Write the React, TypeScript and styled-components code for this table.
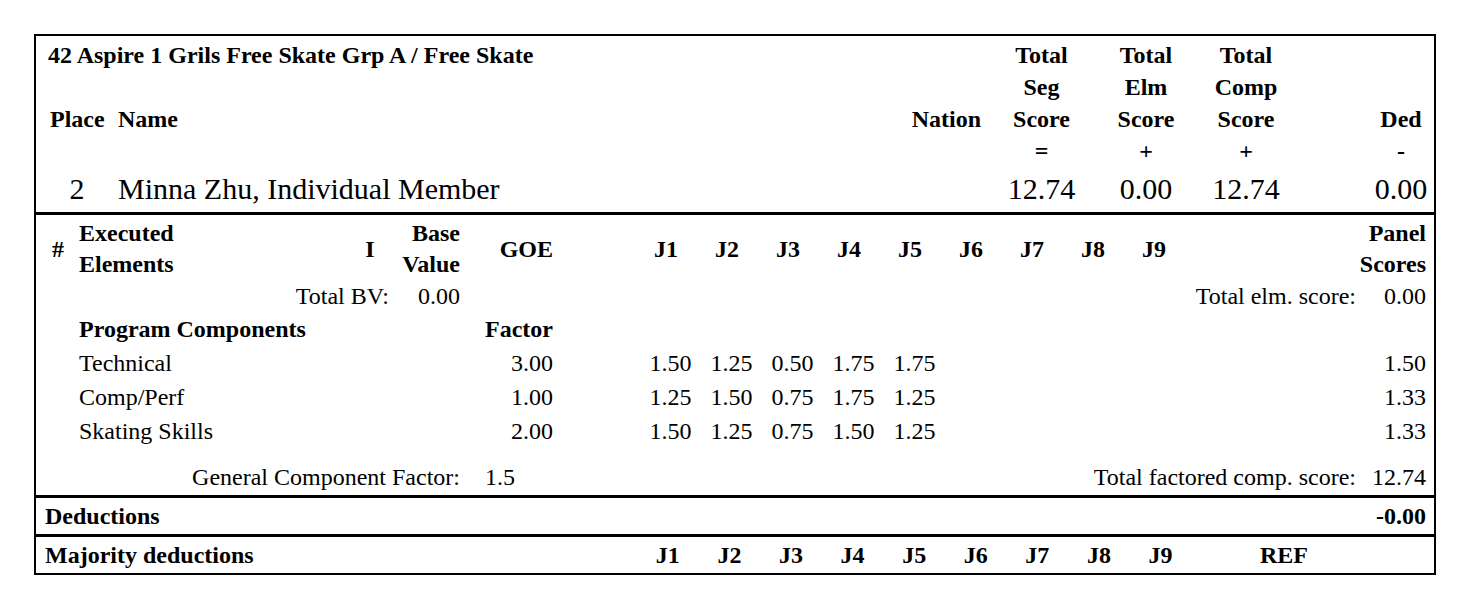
import styled, { createGlobalStyle } from 'styled-components'

const GlobalStyle = createGlobalStyle`
  body {
    margin: 0;
    background: #fff;
  }
`

// column templates, measured from the inner left edge of the sheet
const HEAD_COLS = '8px 66px 785px 90px 113px 96px 104px 70px 66px'
const DETAIL_COLS = '40px 269px 50px 70px 93px 77.5px repeat(9, 61px) 171.5px 78px'
const MAJ_COLS = '601px repeat(9, 61.6px) 185.2px 57.4px'

const Sheet = styled.div`
  box-sizing: border-box;
  width: 1402px;
  margin: 34px 0 0 34px;
  border: 2px solid #000;
  font-family: 'Liberation Serif', 'Times New Roman', Times, serif;
  font-size: 24px;
  color: #000;
`

const Section = styled.div<{ $divider?: boolean; $pt?: number; $pb?: number }>`
  border-top: ${p => (p.$divider ? '3px solid #000' : 'none')};
  padding: ${p => p.$pt ?? 0}px 0 ${p => p.$pb ?? 0}px;
`

const Row = styled.div<{ $cols: string; $h: number; $size?: number; $mt?: number }>`
  display: grid;
  grid-template-columns: ${p => p.$cols};
  height: ${p => p.$h}px;
  margin-top: ${p => p.$mt ?? 0}px;
  font-size: ${p => p.$size ?? 24}px;
  align-items: center;
`

const Cell = styled.div<{
  $align?: 'left' | 'center' | 'right'
  $bold?: boolean
  $span?: number
  $pl?: number
  $pr?: number
}>`
  grid-column: span ${p => p.$span ?? 1};
  text-align: ${p => p.$align ?? 'left'};
  font-weight: ${p => (p.$bold ? 700 : 400)};
  padding-left: ${p => p.$pl ?? 0}px;
  padding-right: ${p => p.$pr ?? 0}px;
  line-height: 31px;
  white-space: nowrap;
`

const judges = ['J1', 'J2', 'J3', 'J4', 'J5', 'J6', 'J7', 'J8', 'J9']

const components = [
  { name: 'Technical', factor: '3.00', marks: ['1.50', '1.25', '0.50', '1.75', '1.75'], panel: '1.50' },
  { name: 'Comp/Perf', factor: '1.00', marks: ['1.25', '1.50', '0.75', '1.75', '1.25'], panel: '1.33' },
  { name: 'Skating Skills', factor: '2.00', marks: ['1.50', '1.25', '0.75', '1.50', '1.25'], panel: '1.33' },
]

function Header() {
  return (
    <Section $pt={3} $pb={3}>
      <Row $cols={HEAD_COLS} $h={32}>
        <Cell $span={4} $pl={12} $bold>42 Aspire 1 Grils Free Skate Grp A / Free Skate</Cell>
        <Cell $align="center" $bold>Total</Cell>
        <Cell $align="center" $bold>Total</Cell>
        <Cell $align="center" $bold>Total</Cell>
      </Row>
      <Row $cols={HEAD_COLS} $h={32}>
        <Cell $span={4} />
        <Cell $align="center" $bold>Seg</Cell>
        <Cell $align="center" $bold>Elm</Cell>
        <Cell $align="center" $bold>Comp</Cell>
      </Row>
      <Row $cols={HEAD_COLS} $h={32}>
        <Cell />
        <Cell $pl={6} $bold>Place</Cell>
        <Cell $pl={8} $bold>Name</Cell>
        <Cell $align="right" $pr={4} $bold>Nation</Cell>
        <Cell $align="center" $bold>Score</Cell>
        <Cell $align="center" $bold>Score</Cell>
        <Cell $align="center" $bold>Score</Cell>
        <Cell />
        <Cell $align="center" $bold>Ded</Cell>
      </Row>
      <Row $cols={HEAD_COLS} $h={32}>
        <Cell $span={4} />
        <Cell $align="center" $bold>=</Cell>
        <Cell $align="center" $bold>+</Cell>
        <Cell $align="center" $bold>+</Cell>
        <Cell />
        <Cell $align="center" $bold>-</Cell>
      </Row>
      <Row $cols={HEAD_COLS} $h={42} $size={30}>
        <Cell />
        <Cell $align="center">2</Cell>
        <Cell $pl={8}>Minna Zhu, Individual Member</Cell>
        <Cell />
        <Cell $align="center">12.74</Cell>
        <Cell $align="center">0.00</Cell>
        <Cell $align="center">12.74</Cell>
        <Cell />
        <Cell $align="center">0.00</Cell>
      </Row>
    </Section>
  )
}

function Details() {
  return (
    <Section $divider $pt={3} $pb={1}>
      <Row $cols={DETAIL_COLS} $h={62}>
        <Cell $pl={16} $bold>#</Cell>
        <Cell $pl={3} $bold>Executed<br />Elements</Cell>
        <Cell $align="center" $bold>I</Cell>
        <Cell $align="right" $pr={5} $bold>Base<br />Value</Cell>
        <Cell $align="right" $pr={5} $bold>GOE</Cell>
        <Cell />
        {judges.map(j => (
          <Cell key={j} $align="center" $bold>{j}</Cell>
        ))}
        <Cell />
        <Cell $align="right" $pr={8} $bold>Panel<br />Scores</Cell>
      </Row>
      <Row $cols={DETAIL_COLS} $h={33}>
        <Cell />
        <Cell $span={2} $align="right" $pr={6}>Total BV:</Cell>
        <Cell $align="right" $pr={5}>0.00</Cell>
        <Cell $span={2} />
        <Cell $span={10} $align="right">Total elm. score:</Cell>
        <Cell $align="right" $pr={8}>0.00</Cell>
      </Row>
      <Row $cols={DETAIL_COLS} $h={33}>
        <Cell />
        <Cell $span={3} $pl={3} $bold>Program Components</Cell>
        <Cell $align="right" $pr={5} $bold>Factor</Cell>
      </Row>
      {components.map(c => (
        <Row key={c.name} $cols={DETAIL_COLS} $h={34}>
          <Cell />
          <Cell $span={3} $pl={3}>{c.name}</Cell>
          <Cell $align="right" $pr={5}>{c.factor}</Cell>
          <Cell />
          {judges.map((j, i) => (
            <Cell key={j} $align="right" $pr={5}>{c.marks[i] ?? ''}</Cell>
          ))}
          <Cell />
          <Cell $align="right" $pr={8}>{c.panel}</Cell>
        </Row>
      ))}
      <Row $cols={DETAIL_COLS} $h={34} $mt={12}>
        <Cell $span={4} $align="right" $pr={5}>General Component Factor:</Cell>
        <Cell $pl={20}>1.5</Cell>
        <Cell $span={11} $align="right">Total factored comp. score:</Cell>
        <Cell $align="right" $pr={8}>12.74</Cell>
      </Row>
    </Section>
  )
}

function Deductions() {
  return (
    <Section $divider>
      <Row $cols="1fr auto" $h={36}>
        <Cell $pl={9} $bold>Deductions</Cell>
        <Cell $align="right" $pr={8} $bold>-0.00</Cell>
      </Row>
    </Section>
  )
}

function Majority() {
  return (
    <Section $divider>
      <Row $cols={MAJ_COLS} $h={36}>
        <Cell $pl={9} $bold>Majority deductions</Cell>
        {judges.map(j => (
          <Cell key={j} $align="center" $bold>{j}</Cell>
        ))}
        <Cell $align="center" $bold>REF</Cell>
        <Cell />
      </Row>
    </Section>
  )
}

export default function App() {
  return (
    <>
      <GlobalStyle />
      <Sheet>
        <Header />
        <Details />
        <Deductions />
        <Majority />
      </Sheet>
    </>
  )
}
